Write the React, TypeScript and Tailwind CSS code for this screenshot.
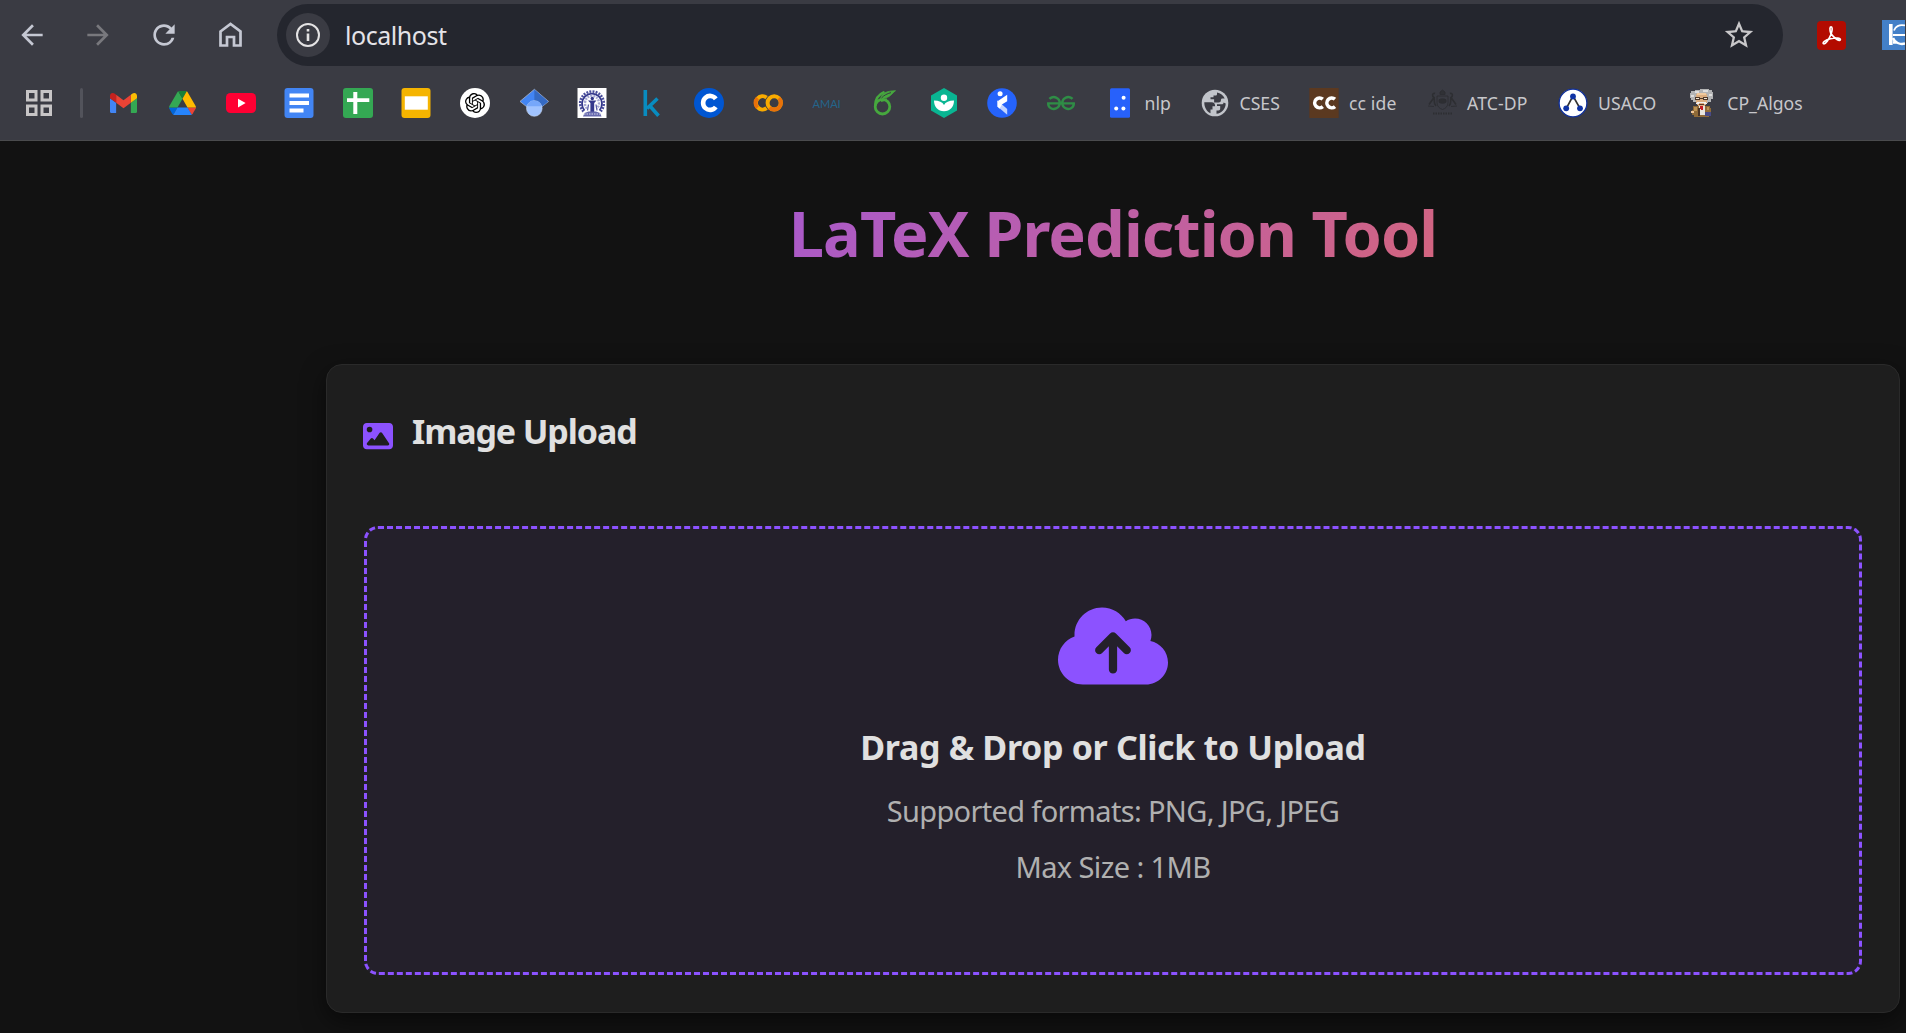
import type { ReactNode } from "react";
import { FaCloudArrowUp, FaImage } from "react-icons/fa6";
import { SiOpenai, SiGeeksforgeeks } from "react-icons/si";
import { MdArrowBack, MdArrowForward, MdRefresh, MdStarOutline } from "react-icons/md";

function Grid() {
  return (
    <svg viewBox="0 0 26 26" className="size-[26px]" fill="none" stroke="#c7c5c6" strokeWidth="3">
      <path d="M1.5 1.5h8.5v8.5H1.5zM16 1.5h8.5v8.5H16zM1.5 16h8.5v8.5H1.5zM16 16h8.5v8.5H16z" />
    </svg>
  );
}
function Gmail() {
  return (
    <svg viewBox="52 42 88 66" className="w-[27px]">
      <path fill="#4285f4" d="M58 108h14V74L52 59v43c0 3.32 2.69 6 6 6" />
      <path fill="#34a853" d="M120 108h14c3.32 0 6-2.69 6-6V59l-20 15" />
      <path fill="#fbbc04" d="M120 48v26l20-15v-8c0-7.42-8.47-11.65-14.4-7.2" />
      <path fill="#ea4335" d="M72 74V48l24 18 24-18v26L96 92" />
      <path fill="#c5221f" d="M52 51v8l20 15V48l-5.6-4.2c-5.94-4.45-14.4-.22-14.4 7.2" />
    </svg>
  );
}
function Drive() {
  return (
    <svg viewBox="0 0 87.3 78" className="w-[27px]">
      <path d="m6.6 66.85 3.85 6.65c.8 1.4 1.95 2.5 3.3 3.3l13.75-23.8h-27.5c0 1.55.4 3.1 1.2 4.5z" fill="#0066da" />
      <path d="m43.65 25-13.75-23.8c-1.35.8-2.5 1.9-3.3 3.3l-25.4 44a9.06 9.06 0 0 0 -1.2 4.5h27.5z" fill="#34a853" />
      <path d="m73.55 76.8c1.35-.8 2.5-1.9 3.3-3.3l1.6-2.75 7.65-13.25c.8-1.4 1.2-2.95 1.2-4.5h-27.5l5.85 11.5z" fill="#ea4335" />
      <path d="m43.65 25 13.75-23.8c-1.35-.8-2.9-1.2-4.5-1.2h-18.5c-1.6 0-3.15.45-4.5 1.2z" fill="#188038" />
      <path d="m59.8 53h-32.3l-13.75 23.8c1.35.8 2.9 1.2 4.5 1.2h50.8c1.6 0 3.15-.45 4.5-1.2z" fill="#2684fc" />
      <path d="m73.4 26.5-12.7-22c-.8-1.4-1.95-2.5-3.3-3.3l-13.75 23.8 16.15 28h27.45c0-1.55-.4-3.1-1.2-4.5z" fill="#ffba00" />
    </svg>
  );
}
function YouTube() {
  return (
    <svg viewBox="0 0 30 20" className="w-[30px]">
      <rect width="30" height="20" rx="4.5" fill="#ff0033" />
      <path d="M12 5.8v8.6l7.6-4.3z" fill="#fff" />
    </svg>
  );
}
function Docs() {
  return (
    <svg viewBox="0 0 30 30" className="size-[30px]">
      <rect x=".5" width="29" height="30" rx="3" fill="#4285f4" />
      <path d="M5.5 5.5h19.5v4H5.5zM5.5 13h19.5v4H5.5zM5.5 20.500h14v4h-14z" fill="#fff" />
    </svg>
  );
}
function Sheets() {
  return (
    <svg viewBox="0 0 30 30" className="size-[30px]">
      <rect width="30" height="30" rx="3" fill="#34a853" />
      <path d="M10.300 4h4v6.300h12v3.600h-12V26h-4V13.900H4v-3.600h6.300z" fill="#fff" />
    </svg>
  );
}
function Slides() {
  return (
    <svg viewBox="0 0 30 30" className="size-[30px]">
      <rect x=".5" width="29" height="30" rx="3" fill="#f5b400" />
      <path d="M3.800 8.300h23v13.400h-23z" fill="#fff" />
    </svg>
  );
}
function ChatGpt() {
  return (
    <span className="flex size-[30px] items-center justify-center rounded-full bg-white">
      <SiOpenai className="size-5 text-black" />
    </span>
  );
}
function Scholar() {
  return (
    <svg viewBox="0 0 30 30" className="size-[30px]">
      <path d="M15.400 1.300 1 13.400l6.500 5.200h15.600l6.400-5.200z" fill="#4285f4" stroke="#a9b4c8" strokeWidth=".8" />
      <path d="M15.400 1.500v12.400l7.700 4.700 6-5.200z" fill="#356ac3" />
      <circle cx="15.300" cy="20.500" r="7.800" fill="#a0c3ff" stroke="#c6d6f0" strokeWidth=".6" />
      <path d="M8 18.300a7.600 7.600 0 0 1 14.600 0z" fill="#76a7fa" />
    </svg>
  );
}
function Institute() {
  return (
    <svg viewBox="0 0 30 30" className="size-[30px]">
      <path d="M.5 0h29v30H.5z" fill="#fff" />
      <path d="M6.500 23.500a11.800 11.800 0 1 1 17 0" fill="none" stroke="#4a4e9c" strokeWidth="2.600" strokeDasharray="1.900 1.200" />
      <path d="M7.500 22.500a10 10.200 0 1 1 15 0" fill="none" stroke="#34388c" strokeWidth="1.800" />
      <path d="M10 20.500a7 7.500 0 1 1 10 0" fill="none" stroke="#a5a8d2" strokeWidth="2.400" strokeDasharray="2 1" />
      <circle cx="15.300" cy="10.500" r="1.700" fill="#2f3388" />
      <path d="M11 12.500h8.500l-2.300 2.500v9h-3.800v-9z" fill="#34388c" />
      <path d="M11.500 16.500l-1 6M19 16.500l1 6" stroke="#5a5ea8" strokeWidth="1.300" />
      <path d="M6 28.500l1.500-3.500 4-1.500h7.500l4 1.500 1.500 3.500z" fill="#6669ae" />
      <path d="M7 26h16" stroke="#d5d6ea" strokeDasharray="1.500 1" />
    </svg>
  );
}
function Kaggle() {
  return (
    <svg viewBox="0 0 30 30" className="size-[30px]" fill="none" stroke="#088cc0" strokeWidth="3.600">
      <path d="M9.300 2v26M21.500 10.500 11 20.500M13.500 17.500l9 10.200" />
    </svg>
  );
}
function Coursera() {
  return (
    <svg viewBox="0 0 30 30" className="size-[30px]">
      <circle cx="15" cy="15" r="15" fill="#0056d2" />
      <path d="M21.800 10.800a7 7 0 1 0 0 8.200" fill="none" stroke="#fff" strokeWidth="4.600" />
    </svg>
  );
}
function Colab() {
  return (
    <svg viewBox="0 0 30 30" className="size-[30px]" fill="none" strokeWidth="4">
      <path d="M13.600 9.600a6.600 6.600 0 1 0 0 10.600" stroke="#f9ab00" />
      <path d="M4.500 10.200a6.600 6.600 0 0 0 0 9.400" stroke="#e8710a" />
      <circle cx="21.200" cy="14.900" r="6.600" stroke="#f9ab00" />
      <path d="M25.900 10.200a6.600 6.600 0 0 1-9.400 9.400" stroke="#e8710a" />
    </svg>
  );
}
function Amai() {
  return <span className="font-['Lato'] text-[11px] leading-none whitespace-nowrap text-[#23658b]">AMAI</span>;
}
function Overleaf() {
  return (
    <svg viewBox="0 0 30 30" className="size-[30px]" fill="none" stroke="#46a83e">
      <circle cx="12.500" cy="18.700" r="7.300" strokeWidth="2.800" />
      <path d="M5.200 18C5 11.500 8 6.500 14.500 3.800" strokeWidth="2.400" />
      <path d="M10.500 11.500C11 5.500 16 3 25.500 2.700 22 5 20.500 9.800 12.500 10.500z" fill="#46a83e" strokeWidth=".8" />
      <path d="M11.500 10C14 7.200 17 5.800 21 4.600" stroke="#3a3b43" strokeWidth="1" />
      <path d="M11 13l6-1.800" strokeWidth="2" />
    </svg>
  );
}
function Khan() {
  return (
    <svg viewBox="0 0 30 30" className="size-[30px]">
      <path d="M15 0l13 7.500v15L15 30 2 22.500v-15z" fill="#09b592" />
      <circle cx="15" cy="9.800" r="3.200" fill="#fff" />
      <path d="M5 12.500c5 0 8.500 1.500 10 4.500 1.500-3 5-4.500 10-4.500 0 6.500-4 10.800-10 10.800S5 19 5 12.500z" fill="#fff" />
    </svg>
  );
}
function Runner() {
  return (
    <svg viewBox="0 0 30 30" className="size-[30px]">
      <circle cx="15" cy="15" r="14.800" fill="#2563fb" />
      <circle cx="13.100" cy="5.700" r="2.500" fill="#fff" />
      <path d="M10.500 13.200 20.200 6.800v6.400L14 17z" fill="#fff" />
      <path d="M10.500 12.500 20.200 21v5.700L10.500 18.500z" fill="#c3d4fe" />
      <path d="M10.500 12.500 15 16.500l-2.500 4.200-2-2.200z" fill="#fff" />
    </svg>
  );
}
function Nlp() {
  return (
    <svg viewBox="0 0 30 30" className="size-[30px]">
      <rect x="5" y=".3" width="20" height="29.500" rx="1.500" fill="#2761fb" />
      <circle cx="18.600" cy="9.700" r="2" fill="#fff" />
      <circle cx="11.200" cy="20.500" r="2" fill="#fff" />
      <circle cx="18.400" cy="20.500" r="2" fill="#fff" />
    </svg>
  );
}
function Globe() {
  return (
    <svg viewBox="0 0 30 30" className="size-[30px]">
      <circle cx="15" cy="15" r="13.300" fill="#c1c4ca" />
      <path
        d="M4.300 14.200h7.200c2.600 0 3.600 1.600 3.600 4h-2.600v3.200h-2v3.800C6.500 23.300 4.200 19 4.300 14.200zM17 4.500c3.500.6 6.300 2.800 7.700 6h-2.200c-1 0-1.600.5-1.600 1.800 0 1.500-1 2.200-2.400 2.200h-4.400v-3.300h-3.600v-2h3V7.600h1.800c1.200 0 1.700-.6 1.700-1.700zM25.700 15.500c0 5.300-4.200 9.800-9.200 10.300v-3.200h1.800c1.300 0 1.900-.7 1.900-2v-2.500h-3.200v-1.800h4.700c1.200 0 1.900-.8 1.900-1.800z"
        fill="#3a3b43"
      />
    </svg>
  );
}
function Cc() {
  return (
    <svg viewBox="0 0 30 30" className="size-[30px]">
      <path d="M.3 0h29.400v30H.3z" fill="#5b3920" />
      <path d="M13.800 11.200a4.900 4.900 0 1 0 0 7.400M26 11.200a4.900 4.900 0 1 0 0 7.400" fill="none" stroke="#fff" strokeWidth="3.600" />
    </svg>
  );
}
function Crest() {
  return (
    <svg viewBox="0 0 30 30" className="size-[30px]" fill="none" stroke="#2d2e32" strokeWidth=".9">
      <path d="M10 8h11v6.500c0 4-2.500 6-5.500 7-3-1-5.500-3-5.500-7z" />
      <path d="M12 11.800c2-1.300 5-1.300 7 0v2.500c-2 1.300-5 1.300-7 0z" fill="#2d2e32" />
      <path d="M13 6.500V4l2.500-2L18 4v2.500z" fill="#303136" />
      <path d="M8 5.500c-3-1-3 3-1 4L2 16.500M23 5.500c3-1 3 3 1 4l5 7M7 10c1 3-1 5 2 8M24 10c-1 3 1 5-2 8" strokeWidth="1.600" />
      <path d="M1 18l6 .5M30 18l-6 .5" />
      <path d="M6 25.500h19" strokeWidth="2" strokeDasharray="1.500 1" />
    </svg>
  );
}
function Usaco() {
  return (
    <svg viewBox="0 0 30 30" className="size-[30px]">
      <circle cx="15" cy="15" r="13.900" fill="#fff" stroke="#10309a" strokeWidth="1.300" />
      <path d="M8.500 20 15 8l6.800 12" fill="none" stroke="#333" strokeWidth="1.600" />
      <circle cx="15" cy="8.500" r="2.900" fill="#0f33a5" />
      <circle cx="8.200" cy="20.300" r="2.900" fill="#0f33a5" />
      <circle cx="22" cy="20.300" r="2.900" fill="#0f33a5" />
    </svg>
  );
}
function Professor() {
  return (
    <svg viewBox="0 0 30 30" className="size-[30px]" shapeRendering="crispEdges">
      <path d="M8 2h5V1h9v1h3v2h1v7h-2v3h-3v1H9v-1H6v-2H4v-2H3V5h1V3h4z" fill="#b3b4b5" />
      <path d="M8 3h4v2H8zM16 2h5v2h-5zM4 7h3v2H4zM22 6h3v2h-3z" fill="#dedede" />
      <path d="M9 6h11v9l-2 3h-7l-2-3z" fill="#dcae80" />
      <path d="M10 5h9v2h-9z" fill="#f0c99d" />
      <path d="M8 9h5v1h3V9h5v3h-5v-1h-3v1H8z" fill="#4d382a" />
      <path d="M9 10h3v1H9zM17 10h3v1h-3z" fill="#f3e7d4" />
      <path d="M10 14h9v1h1v1h-3v-1h-5v1H9v-1h1z" fill="#eee" />
      <path d="M12 16h5v1h-5z" fill="#5c3526" />
      <path d="M6 18h17v2h1v7h-2v2H7v-2H5v-5h1z" fill="#8f6a38" />
      <path d="M7 19h3v4H7zM20 19h2v3h-2z" fill="#bd9353" />
      <path d="M12 18h6v9h-6z" fill="#e8e5e0" />
      <path d="M13 18h3v4h-2v-1h-1z" fill="#c61c22" />
      <path d="M11 20h2v8h-2z" fill="#4b3524" />
      <path d="M18 24h6v4h-6z" fill="#494a86" />
      <path d="M4 23h3v2H4z" fill="#f0c79a" />
    </svg>
  );
}

function Bookmark({ icon, label, width }: { icon: ReactNode; label?: string; width?: string }) {
  return (
    <div className="flex shrink-0 items-center">
      <div className="flex size-[30px] items-center justify-center">{icon}</div>
      {label && <span className={`ml-2.5 text-[17.6px] leading-6 whitespace-nowrap text-[#c7c7cb] ${width}`}>{label}</span>}
    </div>
  );
}

const iconBookmarks = [
  Gmail, Drive, YouTube, Docs, Sheets, Slides, ChatGpt, Scholar,
  Institute, Kaggle, Coursera, Colab, Amai, Overleaf, Khan, Runner,
];

export default function App() {
  return (
    <div className="flex h-[1033px] w-[1906px] flex-col overflow-hidden bg-[#121212] font-['Noto_Sans','Open_Sans',sans-serif]">
      <header className="h-[141px] shrink-0 border-b border-[#4a4b4d] bg-[#3a3b43]">
        <div className="flex h-[70px] items-center">
          <nav className="flex w-[277px] shrink-0 items-center gap-[34px] pl-4 text-[#c5c8d3]">
            <MdArrowBack className="size-8" />
            <MdArrowForward className="size-8 text-[#78787d]" />
            <MdRefresh className="size-8" />
            <svg viewBox="0 0 32 32" className="size-8" fill="none" stroke="currentColor" strokeWidth="2.700">
              <path d="M6.500 12.500 16.500 5l10 7.500v14H20V18h-7v8.500H6.500z" />
            </svg>
          </nav>
          <div className="flex h-[62px] w-[1506px] items-center rounded-full bg-[#24262e] pr-[27px] pl-[9px]">
            <span className="flex size-11 items-center justify-center rounded-full bg-[#3a3b43]">
              <svg viewBox="0 0 24 24" className="size-6" fill="none" stroke="#e4e3e4" strokeWidth="2">
                <circle cx="12" cy="12" r="11" />
                <path d="M12 10.500v7.500M12 6v2.600" strokeWidth="2.600" />
              </svg>
            </span>
            <span className="mb-px ml-[15px] flex-1 text-[25px] leading-8 tracking-[-0.45px] text-[#e4e3e8]">localhost</span>
            <MdStarOutline className="size-[34px] text-[#c9c8ca]" />
          </div>
          <span className="ml-[34px] flex size-[29px] shrink-0 items-center justify-center rounded bg-[#b30b00]">
            <svg viewBox="0 0 24 24" className="size-[23px]" fill="none" stroke="#fff" strokeWidth="1.700">
              <path d="M11.300 10C9.800 5 10.300 3 11.600 3s1.600 2.500 0 7.500C9.500 16 6 21 4 20.700c-2.500-.7 1.500-4.200 7-5.300 6-1.300 10.500-.8 10.300 1-.3 2-6-.6-10-6.400z" />
            </svg>
          </span>
          <svg viewBox="0 0 23 30" className="ml-9 h-[30px] w-[23px] shrink-0" fill="none" stroke="#fff">
            <path d="M0 0h23v30H0z" fill="#4380c8" stroke="none" />
            <path d="M8.800 4v21" strokeWidth="3.600" />
            <path d="M11 15h12M23 5.500c-6-1.500-10 1.500-11 5" strokeWidth="1.800" />
            <path d="M11 18c1.500 4.500 7 7 12 5.500M11 22.500h4" strokeWidth="2.400" />
          </svg>
        </div>
        <div className="flex h-[66px] items-center">
          <div className="flex w-[108.500px] shrink-0 items-center pl-[26px]">
            <Grid />
            <span className="ml-7 h-[30px] w-[3px] rounded-full bg-[#52535b]" />
          </div>
          <div className="flex items-center gap-[28.600px]">
            {iconBookmarks.map((Icon, i) => (
              <Bookmark key={i} icon={<Icon />} />
            ))}
            <Bookmark icon={<SiGeeksforgeeks className="size-7 text-[#2f8d46]" />} />
            <Bookmark icon={<Nlp />} label="nlp" width="w-[26.400px]" />
            <Bookmark icon={<Globe />} label="CSES" width="w-[40.900px]" />
            <Bookmark icon={<Cc />} label="cc ide" width="w-[49.400px] tracking-[0.1px]" />
            <Bookmark icon={<Crest />} label="ATC-DP" width="w-[62.400px] tracking-[0.15px]" />
            <Bookmark icon={<Usaco />} label="USACO" width="w-[60.700px] tracking-[0.1px]" />
            <Bookmark icon={<Professor />} label="CP_Algos" width="w-[76px]" />
          </div>
        </div>
      </header>

      <main className="ml-[326px] flex w-[1574px] flex-col">
        <h1 className="mt-12 bg-[linear-gradient(135deg,#8c52ff,#f06c4b)] bg-clip-text text-center text-[63px] leading-[88px] font-bold tracking-[-0.95px] text-transparent">
          LaTeX Prediction Tool
        </h1>
        <section className="mt-[87px] flex h-[649px] flex-col rounded-2xl border border-[#2a2a2a] bg-[#1e1e1e] px-[37px] shadow-[0_8px_24px_rgba(0,0,0,0.5)]">
          <h2 className="mt-[42px] flex items-center gap-[19px] text-[34px] leading-[48px] font-bold tracking-[-1.1px] text-[#e0e0e0]">
            <FaImage className="mt-2.5 -ml-px size-[30px] text-[#8c52ff]" />
            Image Upload
          </h2>
          <div className="mt-[71px] flex h-[449px] flex-col items-center rounded-[14px] border-[3px] border-dashed border-[#8c52ff] bg-[#24202b]">
            <FaCloudArrowUp className="mt-[73px] h-[88px] w-[110px] text-[#8c52ff]" />
            <h3 className="mt-[33px] text-[34px] leading-[48px] font-bold tracking-[-0.34px] text-[#e0e0e0]">
              Drag &amp; Drop or Click to Upload
            </h3>
            <p className="mt-5 text-[29px] leading-[40px] tracking-[-0.66px] text-[#b0b0b0]">Supported formats: PNG, JPG, JPEG</p>
            <p className="mt-4 text-[29px] leading-[40px] tracking-[-0.6px] text-[#b0b0b0]">Max Size : 1MB</p>
          </div>
        </section>
      </main>
    </div>
  );
}
